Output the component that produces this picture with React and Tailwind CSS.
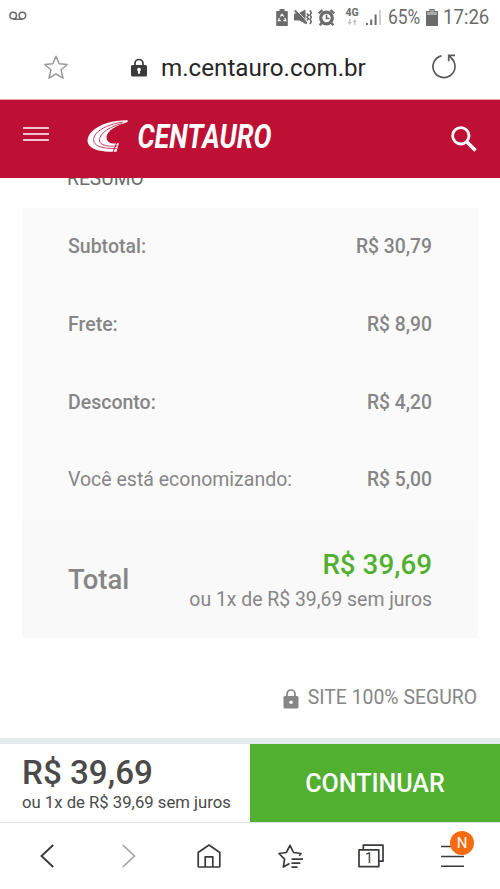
import React from 'react';

const rows = [
  { label: 'Subtotal:', value: 'R$ 30,79', weight: 'font-medium' },
  { label: 'Frete:', value: 'R$ 8,90', weight: 'font-medium' },
  { label: 'Desconto:', value: 'R$ 4,20', weight: 'font-medium' },
  { label: 'Você está economizando:', value: 'R$ 5,00', weight: 'font-normal' },
];

function StatusBar() {
  return (
    <div className="h-9 shrink-0 flex items-center justify-between pl-[9px] pr-[11px] text-[#6b6b6b]">
      {/* Voicemail */}
      <svg className="w-[18px] h-[10px] -mt-[4px]" viewBox="0 0 18 10" fill="none" stroke="currentColor" strokeWidth="1.5">
        <circle cx="4.2" cy="4.6" r="3.3" />
        <circle cx="13.4" cy="4.6" r="3.3" />
        <path d="M4 8.2h9.6" />
      </svg>

      <div className="flex items-center -mt-[2px]">
        {/* Battery saver */}
        <svg className="w-[12px] h-[17px]" viewBox="0 0 12 17">
          <path fill="currentColor" d="M3.5 0h5v2H11a.8.8 0 01.8.8v13.4a.8.8 0 01-.8.8H1a.8.8 0 01-.8-.8V2.8A.8.8 0 011 2h2.5z" />
          <path fill="none" stroke="#fff" strokeWidth="1.2" d="M4.3 7.5L6 5.2l1.7 2.3M8.8 9l1 2.7H7.3M4.8 11.7H2.3l1-2.7" />
        </svg>
        {/* Muted with vibration */}
        <svg className="w-[18px] h-[16px] ml-[6px]" viewBox="0 0 18 16" fill="none" stroke="currentColor">
          <path fill="currentColor" stroke="none" d="M0 4.5h4L11.5.5V15l-6-3.500H0z" />
          <path stroke="#fff" strokeWidth="0.8" d="M2.3 1.2L12.800 12" />
          <path strokeWidth="2" d="M.8 1.5l12 13" />
          <path strokeWidth="1.6" d="M13 4.5l1.3 1.8L13 8l1.3 1.8-1.300 1.700M16 1.500l1.300 2.200L16 6l1.300 2.200L16 10.500l1.300 2.200L16 15" />
        </svg>
        {/* Alarm */}
        <svg className="w-[17px] h-[17px] ml-[6px]" viewBox="0 0 17 17">
          <g fill="none" stroke="currentColor" strokeWidth="2.4">
            <path d="M.8 4.5L4.5 1M16.200 4.500L12.500 1M3.500 14l-1.700 2.300M13.500 14l1.700 2.300" />
          </g>
          <circle cx="8.5" cy="9" r="7.4" fill="currentColor" />
          <circle cx="8.5" cy="9" r="4.2" fill="#fff" />
          <path d="M8.5 5.5v4h3" fill="none" stroke="currentColor" strokeWidth="1.6" />
        </svg>
        {/* Network type */}
        <div className="ml-[10px] w-[14px] h-[18px] flex flex-col items-center">
          <span className="text-[10.5px] leading-[10px] font-bold">4G</span>
          <svg className="w-[10px] h-[6px] mt-[1px]" viewBox="0 0 10 6" fill="#c4c4c4">
            <path d="M2 0h1.500v3H5L2.700 6 .5 3H2zM7 6h1.500V3H10L7.700 0 5.500 3H7z" />
          </svg>
        </div>
        {/* Signal strength */}
        <svg className="w-[17px] h-[17px] ml-[6px]" viewBox="0 0 17 17" fill="currentColor">
          <path d="M1 14h2v2H1zM5.200 10.500h2V16h-2zM9.600 5.500h2V16h-2z" />
          <path d="M14 1h2v15h-2z" fill="#cfcfcf" />
        </svg>
        <span className="ml-[6px] w-[33px] text-[20px] leading-5 whitespace-nowrap">
          <span className="inline-block origin-left scale-x-[0.87]">65%</span>
        </span>
        {/* Battery */}
        <svg className="w-[12px] h-[17px] ml-[5px]" viewBox="0 0 12 17">
          <path fill="#a9a9a9" d="M3.500 0h5v2H12v5H0V2h3.500z" />
          <path fill="currentColor" d="M0 6h12v10.200a.8.8 0 01-.8.8H.8a.8.8 0 01-.8-.8z" />
          <path fill="none" stroke="currentColor" d="M.5 7V2.500H4V.5h4v2h3.500V7" />
        </svg>
        <span className="ml-[5px] w-[46px] text-[20px] leading-5 whitespace-nowrap">
          <span className="inline-block origin-left scale-x-[0.93]">17:26</span>
        </span>
      </div>
    </div>
  );
}

function AddressBar() {
  return (
    <div className="h-[63px] shrink-0 flex items-center pl-[44px] pr-[43px]">
      <svg className="w-[24px] h-[25px] -mt-[1px]" viewBox="0 0 24 25" fill="none" stroke="#999" strokeWidth="1.5" strokeLinejoin="round">
        <path d="M12 1.300l3.200 7.500 8 .7-6.100 5.300 1.900 8.400-7-4.300-7 4.300 1.900-8.400L.8 9.500l8-.7z" />
      </svg>
      <svg className="w-[16px] h-[19px] ml-[63px] -mt-[1px]" viewBox="0 0 16 19">
        <path d="M4 8V5.500a4 4 0 018 0V8" fill="none" stroke="#3b3b3b" strokeWidth="1.7" />
        <rect x="0" y="7" width="16" height="11.5" rx="1.5" fill="#3b3b3b" />
        <path d="M8 9.700a1.900 1.900 0 011 3.500v2.500H7v-2.500a1.900 1.900 0 011-3.500z" fill="#fff" />
      </svg>
      <span className="ml-[14px] text-[24.2px] leading-8 text-[#262626] whitespace-nowrap">m.centauro.com.br</span>
      <svg className="w-[26px] h-[26px] ml-auto -mt-[3px]" viewBox="0 0 26 26" fill="none" stroke="#5a5a5a" strokeWidth="1.7">
        <path d="M10.500 2.800A11 11 0 1020.500 5.500" />
        <path d="M24 2.300h-6.300v6M17.900 2.500l5 5.300" />
      </svg>
    </div>
  );
}

function StoreHeader() {
  return (
    <header className="relative z-10 h-[79px] shrink-0 bg-[#bd1034] border-t border-[#e9a3b1] flex items-center pl-[23px] pr-[23px]">
      <svg className="w-[26px] h-[14px] -mt-[10px]" viewBox="0 0 26 14" stroke="#fff" strokeWidth="1.3">
        <path d="M0 1h26M0 7h26M0 13h26" />
      </svg>
      {/* Logo */}
      <svg className="w-[41px] h-[32px] ml-[38px] -mt-[6px]" viewBox="262 73 122 96">
        <path fill="#fff" d="M384 74C345 73 300 84 277 107c-16 16-18 32-7 44 14 15 44 18 80 17l7-25c-13 1-24 1-31-5-13-12-4-28 14-40 15-9 30-15 43-19z" />
        <g fill="none" stroke="#bd1034" strokeWidth="2.4">
          <path d="M370 79c-38 6-68 18-82 36-11 15-8 29 7 36 13 6 35 8 56 8" />
          <path d="M366 84c-30 8-52 20-62 35-9 14-6 23 6 28 11 5 26 5 44 4" />
          <path d="M351 140l-11 29" strokeWidth="3" />
        </g>
      </svg>
      <svg className="w-[142px] h-[40px] ml-[7px] -mt-[6px] overflow-visible" viewBox="0 0 142 40">
        <text x="2.5" y="32" textLength="134" lengthAdjust="spacingAndGlyphs" className="text-[34px] font-bold italic" fill="#fff">CENTAURO</text>
      </svg>
      <svg className="w-[26px] h-[26px] ml-auto" viewBox="0 0 26 26" fill="none" stroke="#fff">
        <circle cx="9.8" cy="9.8" r="8.2" strokeWidth="2.8" />
        <path d="M16 16l8.500 8.500" strokeWidth="3.6" />
      </svg>
    </header>
  );
}

function Summary() {
  return (
    <main className="flex-1 min-h-0 px-[22px]">
      {/* Heading is scrolled halfway under the sticky header */}
      <div className="h-[30px] pl-[45px]">
        <h2 className="relative -top-[9px] text-[19.3px] leading-5 text-[#6e6e6e]">RESUMO</h2>
      </div>
      <section className="h-[430px] bg-[#fafafa] text-[#868686]">
        {rows.map((row) => (
          <div key={row.label} className="h-[77.8px] px-[46px] flex items-start justify-between text-[19.5px] leading-6 whitespace-nowrap">
            <span className={`mt-[27px] ${row.weight}`}>{row.label}</span>
            <span className="mt-[27px] text-[19.3px] font-medium">{row.value}</span>
          </div>
        ))}
        <div className="h-[118.8px] bg-[#f9f9f9] px-[46px] pt-[3px] flex items-center justify-between whitespace-nowrap">
          <span className="text-[27.4px] leading-8 font-medium">Total</span>
          <div className="text-right">
            <div className="text-[27.8px] leading-9 font-medium text-[#52b030]">R$ 39,69</div>
            <div className="mt-[3px] text-[19.4px] leading-7">ou 1x de R$ 39,69 sem juros</div>
          </div>
        </div>
      </section>
      <div className="mt-[46px] flex items-center justify-end text-[#868686] text-[19.4px] leading-7 whitespace-nowrap">
        <svg className="w-[16px] h-[20px] mr-[9px] mt-[1px]" viewBox="0 0 16 20">
          <path d="M4 8V5a4 4 0 018 0v3" fill="none" stroke="currentColor" strokeWidth="1.7" />
          <rect x="0.5" y="7" width="15" height="12.5" rx="1.5" fill="currentColor" />
          <circle cx="8" cy="13.2" r="1.8" fill="#fff" />
        </svg>
        <span className="mr-[1px]">SITE 100% SEGURO</span>
      </div>
    </main>
  );
}

function CheckoutBar() {
  return (
    <div className="h-[84px] shrink-0 border-t-[6px] border-[#e3eaed] flex">
      <div className="w-1/2 pl-[22px] pt-[11px] text-[#4a4a4a] whitespace-nowrap">
        <div className="text-[33.2px] leading-9 font-medium">R$ 39,69</div>
        <div className="text-[16.7px] leading-6">ou 1x de R$ 39,69 sem juros</div>
      </div>
      <button className="w-1/2 pt-[1px] bg-[#52b030] text-white text-[25px] font-medium">CONTINUAR</button>
    </div>
  );
}

function BrowserNav() {
  return (
    <nav className="h-[67px] shrink-0 border-t border-[#e2e2e2] flex items-center pl-[40px] pr-[24px] text-[#3a3a3a]">
      <svg className="w-[14px] h-[24px]" viewBox="0 0 14 24" fill="none" stroke="currentColor" strokeWidth="1.9">
        <path d="M13.200 1L1.500 12l11.700 11" />
      </svg>
      <svg className="w-[14px] h-[24px] ml-[68px]" viewBox="0 0 14 24" fill="none" stroke="#a0a0a0" strokeWidth="1.6">
        <path d="M.8 1l11.700 11L.8 23" />
      </svg>
      <svg className="w-[24px] h-[24px] ml-[61px]" viewBox="0 0 24 24" fill="none" stroke="currentColor" strokeWidth="1.7" strokeLinejoin="round">
        <path d="M1.200 8.500L12 1l10.800 7.500V22a1 1 0 01-1 1H2.200a1 1 0 01-1-1z" />
        <path d="M8.200 23V12.800h7.600V23" />
      </svg>
      <svg className="w-[26px] h-[25px] ml-[57px]" viewBox="0 0 26 25" fill="none" stroke="currentColor" strokeWidth="1.7" strokeLinejoin="round">
        <path d="M11.500 19.500L5.300 23l1.300-7.800L1 9.500l7.300-1L12 1.300l3.500 7.200 7.500 1-1.800 2.300" />
        <path d="M13.500 15.200H25M13.500 19.200h8.800M13.500 23.200h6" />
      </svg>
      <div className="relative ml-[54px] w-[26px] h-[24px]">
        <svg className="w-[26px] h-[24px]" viewBox="0 0 26 24" fill="none" stroke="currentColor" strokeWidth="1.7" strokeLinejoin="round">
          <path d="M5.300 5.800V1.200H25v16h-4.200" />
          <path d="M1 5.800h19.800v16.800H1z" />
        </svg>
        <span className="absolute left-0 top-[7px] w-[22px] text-center text-[14px] leading-[15px]">1</span>
      </div>
      <div className="relative ml-[57px] w-[23px] h-[24px]">
        <svg className="w-[23px] h-[24px]" viewBox="0 0 23 24" fill="none" stroke="currentColor" strokeWidth="1.6">
          <path d="M0 2.500h23M0 12.500h23M0 22.200h23" />
        </svg>
        <span className="absolute left-[9px] -top-[13px] w-[24px] h-[24px] rounded-full bg-[#f76b10] text-white text-[15px] flex items-center justify-center">N</span>
      </div>
    </nav>
  );
}

export default function App() {
  return (
    <div className="w-[500px] h-[889px] overflow-hidden bg-white flex flex-col font-['Roboto',sans-serif]">
      <StatusBar />
      <AddressBar />
      <StoreHeader />
      <Summary />
      <CheckoutBar />
      <BrowserNav />
    </div>
  );
}
